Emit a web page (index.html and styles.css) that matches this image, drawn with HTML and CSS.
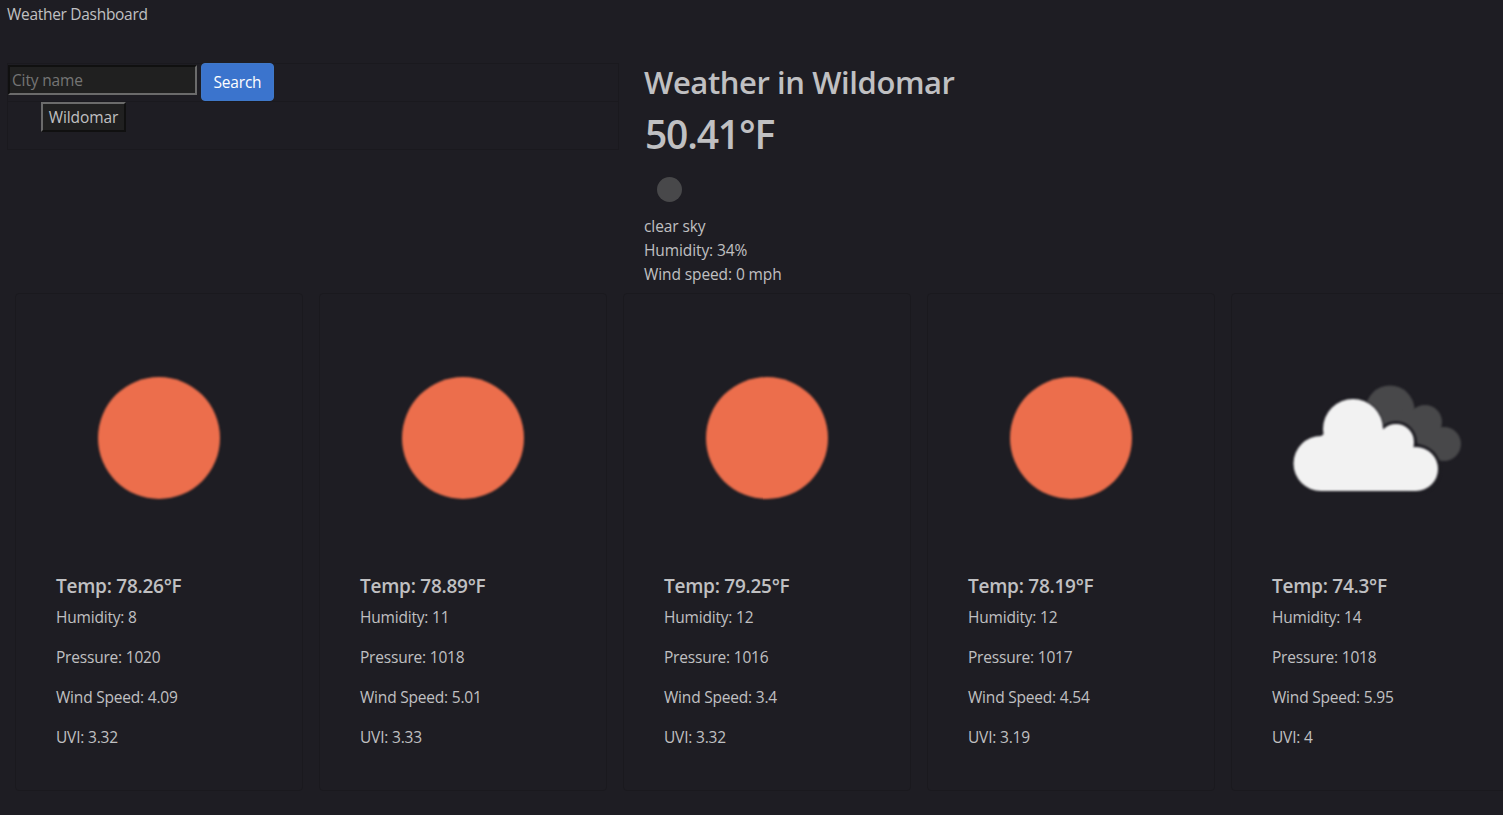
FILE: index.html
```html
<!DOCTYPE html>
<html lang="en">
<head>
<meta charset="utf-8">
<title>Weather Dashboard</title>
<link rel="stylesheet" href="styles.css">
</head>
<body>
<svg class="defs" aria-hidden="true">
  <symbol id="sun" viewBox="0 0 206 206"><circle cx="103" cy="103" r="61" fill="#ec6e4c"/></symbol>
  <symbol id="clouds" viewBox="0 0 206 206">
    <g fill="#48484a"><circle cx="118" cy="75" r="24.5"/><circle cx="153" cy="87" r="17"/><circle cx="172" cy="109" r="17"/><path d="M119 76L142 74L166 94L172 125L145 108Z"/></g>
    <g fill="#1e1d23"><circle cx="81" cy="94" r="31"/><circle cx="124" cy="107" r="21"/><circle cx="144" cy="134" r="25"/></g>
    <g fill="#f2f2f2"><circle cx="81" cy="94" r="30"/><circle cx="124" cy="107" r="18"/><circle cx="144" cy="134" r="22"/><circle cx="49" cy="128.5" r="27.5"/><path d="M49 101L60 94H110L141 107L144 156H49Z"/></g>
  </symbol>
</svg>
<header class="title">Weather Dashboard</header>
<main class="top">
  <section class="search-panel">
    <form class="search-row">
      <input class="city" type="text" placeholder="City name">
      <button class="search" type="button">Search</button>
    </form>
    <div class="history"><button class="history-item" type="button">Wildomar</button></div>
  </section>
  <section class="current">
    <h2 class="place">Weather in Wildomar</h2>
    <h1 class="temp">50.41°F</h1>
    <svg class="now" viewBox="0 0 50 50"><circle cx="25.5" cy="25.5" r="12.5" fill="#48484a"/></svg>
    <div class="details">
      <div>clear sky</div>
      <div>Humidity: 34%</div>
      <div>Wind speed: 0 mph</div>
    </div>
  </section>
</main>
<section class="forecast">
  <article class="card"><svg class="icon"><use href="#sun"/></svg><h5 class="day-temp">Temp: 78.26°F</h5><p>Humidity: 8</p><p>Pressure: 1020</p><p>Wind Speed: 4.09</p><p>UVI: 3.32</p></article>
  <article class="card"><svg class="icon"><use href="#sun"/></svg><h5 class="day-temp">Temp: 78.89°F</h5><p>Humidity: 11</p><p>Pressure: 1018</p><p>Wind Speed: 5.01</p><p>UVI: 3.33</p></article>
  <article class="card"><svg class="icon"><use href="#sun"/></svg><h5 class="day-temp">Temp: 79.25°F</h5><p>Humidity: 12</p><p>Pressure: 1016</p><p>Wind Speed: 3.4</p><p>UVI: 3.32</p></article>
  <article class="card"><svg class="icon"><use href="#sun"/></svg><h5 class="day-temp">Temp: 78.19°F</h5><p>Humidity: 12</p><p>Pressure: 1017</p><p>Wind Speed: 4.54</p><p>UVI: 3.19</p></article>
  <article class="card"><svg class="icon"><use href="#clouds"/></svg><h5 class="day-temp">Temp: 74.3°F</h5><p>Humidity: 14</p><p>Pressure: 1018</p><p>Wind Speed: 5.95</p><p>UVI: 4</p></article>
</section>
</body>
</html>
```
FILE: styles.css
```css
* { box-sizing: border-box; }
body {
  margin: 0;
  height: 815px;
  overflow: hidden;
  background: #1e1d23;
  color: #c0c0c2;
  font: 15.5px/24px "Segoe UI", "Open Sans", "Noto Sans", sans-serif;
  letter-spacing: -0.25px;
}
h1, h2, h5, p { margin: 0; font-weight: 600; }
.defs { display: none; }
.title { height: 63px; padding: 2px 7px; letter-spacing: -0.3px; }
.top { display: flex; height: 230px; gap: 25px; padding-left: 7px; }
.search-panel { width: 612px; height: 87px; border: 1px solid #1a191e; }
.search-row { display: flex; height: 38px; gap: 4px; border-bottom: 1px solid #1a191e; }
.city {
  width: 189px;
  height: 30px;
  margin-top: 1px;
  padding: 1px 2px;
  border: 2px solid;
  border-color: #101010 #6b6b6b #6b6b6b #101010;
  background: #202020;
  color: #c0c0c2;
  font: inherit;
  letter-spacing: -0.15px;
}
.city::placeholder { color: #757575; }
.search {
  width: 73px;
  height: 38px;
  margin-top: -1px;
  padding: 0;
  border: 1px solid #3f78c8;
  border-radius: 4px;
  background: #3b74cd;
  color: #fff;
  font: inherit;
  letter-spacing: -0.2px;
}
.history { padding-left: 33px; }
.history-item {
  display: block;
  width: 85px;
  height: 30px;
  padding: 0;
  border: 2px solid;
  border-color: #6b6b6b #101010 #101010 #6b6b6b;
  background: #202020;
  color: #c0c0c2;
  font: inherit;
  letter-spacing: -0.1px;
}
.place { height: 46px; font-size: 31px; line-height: 38px; letter-spacing: -0.42px; }
.temp { height: 55px; padding-left: 1px; font-size: 39px; line-height: 49px; letter-spacing: -1.2px; }
.now { display: block; width: 50px; height: 50px; }
.details { letter-spacing: -0.1px; }
.forecast { display: flex; gap: 16px; padding-left: 15px; }
.card {
  flex: 0 0 288px;
  height: 498px;
  padding: 41px 40px;
  border: 1px solid #1a191e;
  border-radius: 4px;
}
.icon { display: block; width: 206px; height: 206px; margin-bottom: 33px; filter: blur(0.8px); }
.day-temp { margin-bottom: 7px; font-size: 19px; letter-spacing: -0.25px; }
.card p { margin-bottom: 16px; font-weight: 400; letter-spacing: -0.2px; }
```
